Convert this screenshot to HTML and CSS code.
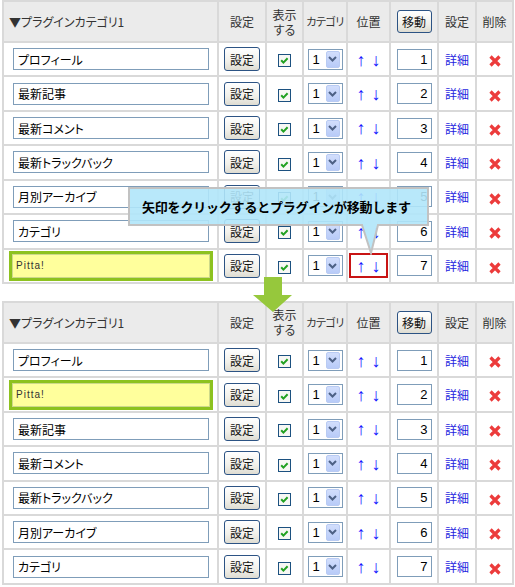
FILE: index.html
```html
<!DOCTYPE html>
<html lang="ja">
<head>
<meta charset="utf-8">
<link rel="stylesheet" href="styles.css">
</head>
<body>
<div class="page">

<table class="grid">
<colgroup><col class="w1"><col class="w2"><col class="w3"><col class="w4"><col class="w5"><col class="w6"><col class="w7"><col class="w8"></colgroup>
<tr class="head">
<td class="c-name">▼プラグインカテゴリ1</td><td>設定</td><td>表示<br>する</td><td class="cat">カテゴリ</td><td>位置</td><td><span class="btn btn-h">移動</span></td><td>設定</td><td>削除</td>
</tr>
<tr><td class="c-name"><span class="tb">プロフィール</span></td><td><span class="btn">設定</span></td><td><svg class="cb" width="13" height="13" viewBox="0 0 13 13"><rect x="0.5" y="0.5" width="12" height="12" fill="#f7f7f4" stroke="#1c5180"/><path d="M3.2 6.3 L5.4 8.6 L9.6 4.2" fill="none" stroke="#21a121" stroke-width="2"/></svg></td><td><span class="sel"><span class="sv">1</span><span class="sb"><svg width="9" height="6" viewBox="0 0 9 6"><path d="M1 1 L4.5 4.5 L8 1" fill="none" stroke="#4d6185" stroke-width="2"/></svg></span></span></td><td><span class="arr"><span>↑</span><span>↓</span></span></td><td><span class="num">1</span></td><td><span class="lk">詳細</span></td><td><svg class="x" width="12" height="12" viewBox="0 0 12 12"><path d="M1.5 1.5 L10.5 10.5 M10.5 1.5 L1.5 10.5" stroke="#ec3b3b" stroke-width="3.2"/></svg></td></tr>
<tr><td class="c-name"><span class="tb">最新記事</span></td><td><span class="btn">設定</span></td><td><svg class="cb" width="13" height="13" viewBox="0 0 13 13"><rect x="0.5" y="0.5" width="12" height="12" fill="#f7f7f4" stroke="#1c5180"/><path d="M3.2 6.3 L5.4 8.6 L9.6 4.2" fill="none" stroke="#21a121" stroke-width="2"/></svg></td><td><span class="sel"><span class="sv">1</span><span class="sb"><svg width="9" height="6" viewBox="0 0 9 6"><path d="M1 1 L4.5 4.5 L8 1" fill="none" stroke="#4d6185" stroke-width="2"/></svg></span></span></td><td><span class="arr"><span>↑</span><span>↓</span></span></td><td><span class="num">2</span></td><td><span class="lk">詳細</span></td><td><svg class="x" width="12" height="12" viewBox="0 0 12 12"><path d="M1.5 1.5 L10.5 10.5 M10.5 1.5 L1.5 10.5" stroke="#ec3b3b" stroke-width="3.2"/></svg></td></tr>
<tr><td class="c-name"><span class="tb">最新コメント</span></td><td><span class="btn">設定</span></td><td><svg class="cb" width="13" height="13" viewBox="0 0 13 13"><rect x="0.5" y="0.5" width="12" height="12" fill="#f7f7f4" stroke="#1c5180"/><path d="M3.2 6.3 L5.4 8.6 L9.6 4.2" fill="none" stroke="#21a121" stroke-width="2"/></svg></td><td><span class="sel"><span class="sv">1</span><span class="sb"><svg width="9" height="6" viewBox="0 0 9 6"><path d="M1 1 L4.5 4.5 L8 1" fill="none" stroke="#4d6185" stroke-width="2"/></svg></span></span></td><td><span class="arr"><span>↑</span><span>↓</span></span></td><td><span class="num">3</span></td><td><span class="lk">詳細</span></td><td><svg class="x" width="12" height="12" viewBox="0 0 12 12"><path d="M1.5 1.5 L10.5 10.5 M10.5 1.5 L1.5 10.5" stroke="#ec3b3b" stroke-width="3.2"/></svg></td></tr>
<tr><td class="c-name"><span class="tb">最新トラックバック</span></td><td><span class="btn">設定</span></td><td><svg class="cb" width="13" height="13" viewBox="0 0 13 13"><rect x="0.5" y="0.5" width="12" height="12" fill="#f7f7f4" stroke="#1c5180"/><path d="M3.2 6.3 L5.4 8.6 L9.6 4.2" fill="none" stroke="#21a121" stroke-width="2"/></svg></td><td><span class="sel"><span class="sv">1</span><span class="sb"><svg width="9" height="6" viewBox="0 0 9 6"><path d="M1 1 L4.5 4.5 L8 1" fill="none" stroke="#4d6185" stroke-width="2"/></svg></span></span></td><td><span class="arr"><span>↑</span><span>↓</span></span></td><td><span class="num">4</span></td><td><span class="lk">詳細</span></td><td><svg class="x" width="12" height="12" viewBox="0 0 12 12"><path d="M1.5 1.5 L10.5 10.5 M10.5 1.5 L1.5 10.5" stroke="#ec3b3b" stroke-width="3.2"/></svg></td></tr>
<tr><td class="c-name"><span class="tb">月別アーカイブ</span></td><td><span class="btn">設定</span></td><td><svg class="cb" width="13" height="13" viewBox="0 0 13 13"><rect x="0.5" y="0.5" width="12" height="12" fill="#f7f7f4" stroke="#1c5180"/><path d="M3.2 6.3 L5.4 8.6 L9.6 4.2" fill="none" stroke="#21a121" stroke-width="2"/></svg></td><td><span class="sel"><span class="sv">1</span><span class="sb"><svg width="9" height="6" viewBox="0 0 9 6"><path d="M1 1 L4.5 4.5 L8 1" fill="none" stroke="#4d6185" stroke-width="2"/></svg></span></span></td><td><span class="arr"><span>↑</span><span>↓</span></span></td><td><span class="num">5</span></td><td><span class="lk">詳細</span></td><td><svg class="x" width="12" height="12" viewBox="0 0 12 12"><path d="M1.5 1.5 L10.5 10.5 M10.5 1.5 L1.5 10.5" stroke="#ec3b3b" stroke-width="3.2"/></svg></td></tr>
<tr><td class="c-name"><span class="tb">カテゴリ</span></td><td><span class="btn">設定</span></td><td><svg class="cb" width="13" height="13" viewBox="0 0 13 13"><rect x="0.5" y="0.5" width="12" height="12" fill="#f7f7f4" stroke="#1c5180"/><path d="M3.2 6.3 L5.4 8.6 L9.6 4.2" fill="none" stroke="#21a121" stroke-width="2"/></svg></td><td><span class="sel"><span class="sv">1</span><span class="sb"><svg width="9" height="6" viewBox="0 0 9 6"><path d="M1 1 L4.5 4.5 L8 1" fill="none" stroke="#4d6185" stroke-width="2"/></svg></span></span></td><td><span class="arr"><span>↑</span><span>↓</span></span></td><td><span class="num">6</span></td><td><span class="lk">詳細</span></td><td><svg class="x" width="12" height="12" viewBox="0 0 12 12"><path d="M1.5 1.5 L10.5 10.5 M10.5 1.5 L1.5 10.5" stroke="#ec3b3b" stroke-width="3.2"/></svg></td></tr>
<tr><td class="c-name"><span class="hl"><span class="tb">Pitta!</span></span></td><td><span class="btn">設定</span></td><td><svg class="cb" width="13" height="13" viewBox="0 0 13 13"><rect x="0.5" y="0.5" width="12" height="12" fill="#f7f7f4" stroke="#1c5180"/><path d="M3.2 6.3 L5.4 8.6 L9.6 4.2" fill="none" stroke="#21a121" stroke-width="2"/></svg></td><td><span class="sel"><span class="sv">1</span><span class="sb"><svg width="9" height="6" viewBox="0 0 9 6"><path d="M1 1 L4.5 4.5 L8 1" fill="none" stroke="#4d6185" stroke-width="2"/></svg></span></span></td><td><span class="ring"><span class="arr"><span>↑</span><span>↓</span></span></span></td><td><span class="num">7</span></td><td><span class="lk">詳細</span></td><td><svg class="x" width="12" height="12" viewBox="0 0 12 12"><path d="M1.5 1.5 L10.5 10.5 M10.5 1.5 L1.5 10.5" stroke="#ec3b3b" stroke-width="3.2"/></svg></td></tr>
</table>

<table class="grid">
<colgroup><col class="w1"><col class="w2"><col class="w3"><col class="w4"><col class="w5"><col class="w6"><col class="w7"><col class="w8"></colgroup>
<tr class="head">
<td class="c-name">▼プラグインカテゴリ1</td><td>設定</td><td>表示<br>する</td><td class="cat">カテゴリ</td><td>位置</td><td><span class="btn btn-h">移動</span></td><td>設定</td><td>削除</td>
</tr>
<tr><td class="c-name"><span class="tb">プロフィール</span></td><td><span class="btn">設定</span></td><td><svg class="cb" width="13" height="13" viewBox="0 0 13 13"><rect x="0.5" y="0.5" width="12" height="12" fill="#f7f7f4" stroke="#1c5180"/><path d="M3.2 6.3 L5.4 8.6 L9.6 4.2" fill="none" stroke="#21a121" stroke-width="2"/></svg></td><td><span class="sel"><span class="sv">1</span><span class="sb"><svg width="9" height="6" viewBox="0 0 9 6"><path d="M1 1 L4.5 4.5 L8 1" fill="none" stroke="#4d6185" stroke-width="2"/></svg></span></span></td><td><span class="arr"><span>↑</span><span>↓</span></span></td><td><span class="num">1</span></td><td><span class="lk">詳細</span></td><td><svg class="x" width="12" height="12" viewBox="0 0 12 12"><path d="M1.5 1.5 L10.5 10.5 M10.5 1.5 L1.5 10.5" stroke="#ec3b3b" stroke-width="3.2"/></svg></td></tr>
<tr><td class="c-name"><span class="hl"><span class="tb">Pitta!</span></span></td><td><span class="btn">設定</span></td><td><svg class="cb" width="13" height="13" viewBox="0 0 13 13"><rect x="0.5" y="0.5" width="12" height="12" fill="#f7f7f4" stroke="#1c5180"/><path d="M3.2 6.3 L5.4 8.6 L9.6 4.2" fill="none" stroke="#21a121" stroke-width="2"/></svg></td><td><span class="sel"><span class="sv">1</span><span class="sb"><svg width="9" height="6" viewBox="0 0 9 6"><path d="M1 1 L4.5 4.5 L8 1" fill="none" stroke="#4d6185" stroke-width="2"/></svg></span></span></td><td><span class="arr"><span>↑</span><span>↓</span></span></td><td><span class="num">2</span></td><td><span class="lk">詳細</span></td><td><svg class="x" width="12" height="12" viewBox="0 0 12 12"><path d="M1.5 1.5 L10.5 10.5 M10.5 1.5 L1.5 10.5" stroke="#ec3b3b" stroke-width="3.2"/></svg></td></tr>
<tr><td class="c-name"><span class="tb">最新記事</span></td><td><span class="btn">設定</span></td><td><svg class="cb" width="13" height="13" viewBox="0 0 13 13"><rect x="0.5" y="0.5" width="12" height="12" fill="#f7f7f4" stroke="#1c5180"/><path d="M3.2 6.3 L5.4 8.6 L9.6 4.2" fill="none" stroke="#21a121" stroke-width="2"/></svg></td><td><span class="sel"><span class="sv">1</span><span class="sb"><svg width="9" height="6" viewBox="0 0 9 6"><path d="M1 1 L4.5 4.5 L8 1" fill="none" stroke="#4d6185" stroke-width="2"/></svg></span></span></td><td><span class="arr"><span>↑</span><span>↓</span></span></td><td><span class="num">3</span></td><td><span class="lk">詳細</span></td><td><svg class="x" width="12" height="12" viewBox="0 0 12 12"><path d="M1.5 1.5 L10.5 10.5 M10.5 1.5 L1.5 10.5" stroke="#ec3b3b" stroke-width="3.2"/></svg></td></tr>
<tr><td class="c-name"><span class="tb">最新コメント</span></td><td><span class="btn">設定</span></td><td><svg class="cb" width="13" height="13" viewBox="0 0 13 13"><rect x="0.5" y="0.5" width="12" height="12" fill="#f7f7f4" stroke="#1c5180"/><path d="M3.2 6.3 L5.4 8.6 L9.6 4.2" fill="none" stroke="#21a121" stroke-width="2"/></svg></td><td><span class="sel"><span class="sv">1</span><span class="sb"><svg width="9" height="6" viewBox="0 0 9 6"><path d="M1 1 L4.5 4.5 L8 1" fill="none" stroke="#4d6185" stroke-width="2"/></svg></span></span></td><td><span class="arr"><span>↑</span><span>↓</span></span></td><td><span class="num">4</span></td><td><span class="lk">詳細</span></td><td><svg class="x" width="12" height="12" viewBox="0 0 12 12"><path d="M1.5 1.5 L10.5 10.5 M10.5 1.5 L1.5 10.5" stroke="#ec3b3b" stroke-width="3.2"/></svg></td></tr>
<tr><td class="c-name"><span class="tb">最新トラックバック</span></td><td><span class="btn">設定</span></td><td><svg class="cb" width="13" height="13" viewBox="0 0 13 13"><rect x="0.5" y="0.5" width="12" height="12" fill="#f7f7f4" stroke="#1c5180"/><path d="M3.2 6.3 L5.4 8.6 L9.6 4.2" fill="none" stroke="#21a121" stroke-width="2"/></svg></td><td><span class="sel"><span class="sv">1</span><span class="sb"><svg width="9" height="6" viewBox="0 0 9 6"><path d="M1 1 L4.5 4.5 L8 1" fill="none" stroke="#4d6185" stroke-width="2"/></svg></span></span></td><td><span class="arr"><span>↑</span><span>↓</span></span></td><td><span class="num">5</span></td><td><span class="lk">詳細</span></td><td><svg class="x" width="12" height="12" viewBox="0 0 12 12"><path d="M1.5 1.5 L10.5 10.5 M10.5 1.5 L1.5 10.5" stroke="#ec3b3b" stroke-width="3.2"/></svg></td></tr>
<tr><td class="c-name"><span class="tb">月別アーカイブ</span></td><td><span class="btn">設定</span></td><td><svg class="cb" width="13" height="13" viewBox="0 0 13 13"><rect x="0.5" y="0.5" width="12" height="12" fill="#f7f7f4" stroke="#1c5180"/><path d="M3.2 6.3 L5.4 8.6 L9.6 4.2" fill="none" stroke="#21a121" stroke-width="2"/></svg></td><td><span class="sel"><span class="sv">1</span><span class="sb"><svg width="9" height="6" viewBox="0 0 9 6"><path d="M1 1 L4.5 4.5 L8 1" fill="none" stroke="#4d6185" stroke-width="2"/></svg></span></span></td><td><span class="arr"><span>↑</span><span>↓</span></span></td><td><span class="num">6</span></td><td><span class="lk">詳細</span></td><td><svg class="x" width="12" height="12" viewBox="0 0 12 12"><path d="M1.5 1.5 L10.5 10.5 M10.5 1.5 L1.5 10.5" stroke="#ec3b3b" stroke-width="3.2"/></svg></td></tr>
<tr><td class="c-name"><span class="tb">カテゴリ</span></td><td><span class="btn">設定</span></td><td><svg class="cb" width="13" height="13" viewBox="0 0 13 13"><rect x="0.5" y="0.5" width="12" height="12" fill="#f7f7f4" stroke="#1c5180"/><path d="M3.2 6.3 L5.4 8.6 L9.6 4.2" fill="none" stroke="#21a121" stroke-width="2"/></svg></td><td><span class="sel"><span class="sv">1</span><span class="sb"><svg width="9" height="6" viewBox="0 0 9 6"><path d="M1 1 L4.5 4.5 L8 1" fill="none" stroke="#4d6185" stroke-width="2"/></svg></span></span></td><td><span class="arr"><span>↑</span><span>↓</span></span></td><td><span class="num">7</span></td><td><span class="lk">詳細</span></td><td><svg class="x" width="12" height="12" viewBox="0 0 12 12"><path d="M1.5 1.5 L10.5 10.5 M10.5 1.5 L1.5 10.5" stroke="#ec3b3b" stroke-width="3.2"/></svg></td></tr>
</table>

<svg class="balloon" width="302" height="68" viewBox="0 0 302 68"><path d="M1 1 H300 V38 H250 L243 66 L234 38 H1 Z" fill="rgba(176,229,250,0.9)" stroke="#c2c2c2" stroke-width="2"/></svg>
<div class="balloon-text">矢印をクリックするとプラグインが移動します</div>

<svg class="down" width="39" height="35" viewBox="0 0 39 35"><polygon points="11,0 29,0 29,18 39,18 20,35 0,18 11,18" fill="#96c83c"/></svg>

</div>
</body>
</html>
```

FILE: styles.css
```css
body {
  margin: 0;
  background: #fff;
  font-family: "Noto Sans CJK JP", sans-serif;
  font-size: 12px;
  color: #333;
  font-feature-settings: "palt";
}

.page {
  position: relative;
  width: 515px;
  height: 587px;
}

.grid {
  margin-left: 2px;
  width: 512px;
  table-layout: fixed;
  border-collapse: separate;
  border-spacing: 2px;
  background: #d9d9d9;
}

.grid + .grid {
  margin-top: 17px;
}

.w1 { width: 213px; }
.w2 { width: 46px; }
.w3 { width: 35px; }
.w4 { width: 42px; }
.w5 { width: 41px; }
.w6 { width: 46px; }
.w7 { width: 36px; }
.w8 { width: 35px; }

.grid td {
  padding: 0;
  height: 32.43px;
  background: #fff;
  text-align: center;
  vertical-align: middle;
  line-height: 15px;
}

.grid .head td {
  height: 39px;
  background: #ebebeb;
  color: #333;
}

.grid td.c-name {
  text-align: left;
  padding-left: 5px;
}

.head .cat {
  font-size: 11px;
  letter-spacing: -0.5px;
}

.tb {
  display: inline-flex;
  align-items: center;
  box-sizing: border-box;
  width: 196px;
  height: 22px;
  margin-left: 4px;
  padding-left: 4px;
  border: 1px solid #7f9db9;
  background: #fff;
  color: #000;
  font-size: 12px;
  vertical-align: middle;
  white-space: nowrap;
}

.hl {
  display: inline-flex;
  box-sizing: border-box;
  width: 204px;
  height: 30px;
  border: 3px solid #8dc21f;
  vertical-align: middle;
}

.hl .tb {
  margin: 0;
  width: 198px;
  height: 24px;
  padding-left: 3px;
  border-color: #cdd98a;
  background: #ffff9c;
  color: #333;
  font-family: "Liberation Sans", sans-serif;
  font-size: 10px;
  letter-spacing: 1px;
}

.btn {
  display: inline-flex;
  align-items: center;
  justify-content: center;
  box-sizing: border-box;
  width: 36px;
  height: 24px;
  border: 1px solid #2c5384;
  border-radius: 3px;
  background: linear-gradient(#ffffff, #f1f0ea 60%, #dedcd2);
  color: #111;
  font-size: 12px;
  vertical-align: middle;
}

.btn-h {
  width: 35px;
  height: 23px;
}

.cb {
  display: inline-block;
  vertical-align: middle;
}

.sel {
  display: inline-flex;
  align-items: center;
  box-sizing: border-box;
  width: 35px;
  height: 21px;
  border: 1px solid #7f9db9;
  background: #fff;
  vertical-align: middle;
}

.sv {
  flex: 1;
  text-align: left;
  padding-left: 4px;
  font-family: "Liberation Sans", sans-serif;
  font-size: 13px;
  color: #000;
}

.sb {
  display: flex;
  align-items: center;
  justify-content: center;
  box-sizing: border-box;
  width: 14px;
  height: 17px;
  margin-right: 2px;
  border: 1px solid #b9cbf3;
  border-radius: 2px;
  background: linear-gradient(#d2defc, #b8cbf8);
}

.arr {
  display: inline-flex;
  gap: 6px;
  vertical-align: middle;
  font-family: "Liberation Sans", sans-serif;
  font-size: 18px;
  line-height: 18px;
  color: #1414ff;
}

.ring {
  display: inline-flex;
  align-items: center;
  justify-content: center;
  box-sizing: border-box;
  width: 39px;
  height: 25px;
  border: 2px solid #c81414;
  vertical-align: middle;
}

.num {
  display: inline-flex;
  align-items: center;
  justify-content: flex-end;
  box-sizing: border-box;
  width: 35px;
  height: 21px;
  padding-right: 3px;
  border: 1px solid #7f9db9;
  background: #fff;
  color: #000;
  font-family: "Liberation Sans", sans-serif;
  font-size: 13px;
  vertical-align: middle;
}

.lk {
  color: #1f1fe0;
  font-size: 12px;
}

.x {
  display: inline-block;
  vertical-align: middle;
}

.balloon {
  position: absolute;
  left: 128px;
  top: 187px;
}

.balloon-text {
  position: absolute;
  left: 142px;
  top: 199px;
  font-size: 13px;
  line-height: 16px;
  font-weight: bold;
  color: #000;
  white-space: nowrap;
  font-feature-settings: normal;
  letter-spacing: -0.2px;
}

.down {
  position: absolute;
  left: 253px;
  top: 277px;
}
```
